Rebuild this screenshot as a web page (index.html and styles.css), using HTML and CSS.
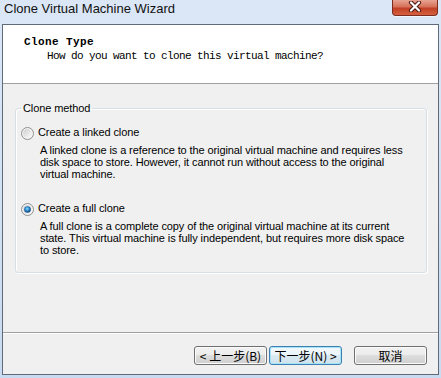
FILE: index.html
```html
<!DOCTYPE html>
<html lang="en">
<head>
    <meta charset="UTF-8">
    <meta name="viewport" content="width=device-width, initial-scale=1.0">
    <title>Clone Virtual Machine Wizard</title>
    <link rel="stylesheet" href="styles.css">
</head>
<body>
    <div class="titlebar">
        <span class="title">Clone Virtual Machine Wizard</span>
        <div class="close-btn">
            <svg width="14" height="11" viewBox="0 0 14 11">
                <path d="M3 1.5 L11 9.5 M11 1.5 L3 9.5" stroke="#4a1810" stroke-width="4.2" stroke-linecap="round"/>
                <path d="M3 1.5 L11 9.5 M11 1.5 L3 9.5" stroke="#fff" stroke-width="2.2" stroke-linecap="round"/>
            </svg>
        </div>
    </div>

    <div class="window">
        <div class="header">
            <div class="header-title">Clone Type</div>
            <div class="header-sub">How do you want to clone this virtual machine?</div>
        </div>

        <div class="content">
            <fieldset class="group">
                <legend>Clone method</legend>

                <div class="option">
                    <div class="option-row">
                        <svg class="radio" width="13" height="13" viewBox="0 0 13 13">
                            <defs>
                                <linearGradient id="rbg" x1="0" y1="0" x2="1" y2="1">
                                    <stop offset="0" stop-color="#cfcfcf"/>
                                    <stop offset="1" stop-color="#fbfbfb"/>
                                </linearGradient>
                            </defs>
                            <circle cx="6.5" cy="6.5" r="6" fill="#f4f4f4" stroke="#8e8f8f"/>
                            <circle cx="6.5" cy="6.5" r="4.5" fill="url(#rbg)"/>
                        </svg>
                        <span>Create a linked clone</span>
                    </div>
                    <p class="desc">A linked clone is a reference to the original virtual machine and requires less disk space to store. However, it cannot run without access to the original virtual machine.</p>
                </div>

                <div class="option option-full">
                    <div class="option-row">
                        <svg class="radio" width="13" height="13" viewBox="0 0 13 13">
                            <defs>
                                <radialGradient id="rdot" cx="0.45" cy="0.4" r="0.6">
                                    <stop offset="0" stop-color="#9fe6ff"/>
                                    <stop offset="0.45" stop-color="#2f8fd6"/>
                                    <stop offset="1" stop-color="#123d6e"/>
                                </radialGradient>
                            </defs>
                            <circle cx="6.5" cy="6.5" r="6" fill="#f4f4f4" stroke="#8e8f8f"/>
                            <circle cx="6.5" cy="6.5" r="4.5" fill="url(#rbg)"/>
                            <circle cx="6.5" cy="6.5" r="3.3" fill="url(#rdot)"/>
                        </svg>
                        <span>Create a full clone</span>
                    </div>
                    <p class="desc">A full clone is a complete copy of the original virtual machine at its current state. This virtual machine is fully independent, but requires more disk space to store.</p>
                </div>
            </fieldset>
        </div>

        <div class="footer">
            <button class="btn">&lt; 上一步(B)</button>
            <button class="btn btn-default">下一步(N) &gt;</button>
            <button class="btn btn-cancel">取消</button>
        </div>
    </div>
</body>
</html>
```

FILE: styles.css
```css
body {
    margin: 0;
    width: 441px;
    height: 378px;
    overflow: hidden;
    background: linear-gradient(#dbe7f6, #c9dbf0);
    font-family: "Liberation Sans", Arial, sans-serif;
    color: #000;
}
.titlebar {
    display: flex;
    align-items: flex-start;
    height: 24px;
}
.title {
    font-size: 13px;
    line-height: 16px;
    padding: 1px 0 0 4px;
    color: #111;
}
.close-btn {
    margin-left: auto;
    margin-right: 3px;
    width: 46px;
    height: 16px;
    box-sizing: border-box;
    border: 1px solid #7d2c1f;
    border-top: none;
    border-radius: 0 0 4px 4px;
    background: linear-gradient(#e8a392, #d6725a 45%, #c23f25 55%, #d4613f);
    box-shadow: 0 1px 0 rgba(255, 255, 255, 0.6);
    display: flex;
    justify-content: center;
    padding-top: 1px;
}
.window {
    margin: 0 2px;
    height: 351px;
    box-sizing: border-box;
    border: 1px solid #5f6b7a;
    background: #f0f0f0;
    display: flex;
    flex-direction: column;
}
.header {
    height: 59px;
    box-sizing: border-box;
    background: #fff;
    border-bottom: 1px solid #a0a0a0;
    padding: 11px 0 0 21px;
    font-family: "Liberation Mono", monospace;
    font-size: 11px;
    line-height: 13px;
}
.header-title {
    font-weight: bold;
    letter-spacing: 0.4px;
}
.header-sub {
    margin: 1px 0 0 23px;
    letter-spacing: -0.6px;
}
.content {
    flex: 1;
    padding: 18px 11px 0 12px;
    border-bottom: 1px solid #a0a0a0;
}
.group {
    margin: 0;
    padding: 0 14px 16px 5px;
    border: 1px solid #d5dfe5;
    border-radius: 3px;
    box-shadow: inset 1px 1px 0 #fff, 1px 1px 0 #fff;
    min-width: 0;
    font-size: 11px;
    letter-spacing: -0.1px;
}
legend {
    margin: 0;
    padding: 0 2px;
    line-height: 13px;
}
.option {
    margin-top: 11px;
}
.option-full {
    margin-top: 22px;
}
.option-row {
    display: flex;
    align-items: flex-start;
    gap: 4px;
    line-height: 13px;
}
.radio {
    margin-top: 1px;
    flex: none;
}
.desc {
    margin: 4px 0 0 19px;
    line-height: 12px;
}
.footer {
    height: 41px;
    box-sizing: border-box;
    box-shadow: inset 0 1px 0 #fff;
    display: flex;
    justify-content: flex-end;
    align-items: flex-start;
    padding: 13px 11px 0 0;
}
.btn {
    width: 73px;
    height: 19px;
    box-sizing: border-box;
    margin: 0;
    padding: 0;
    border: 1px solid #707070;
    border-radius: 3px;
    background: linear-gradient(#f2f2f2, #ebebeb 50%, #dddddd 50%, #cfcfcf);
    box-shadow: inset 0 0 0 1px #fbfbfb;
    font-family: "Noto Sans CJK SC", sans-serif;
    font-size: 12px;
    line-height: 17px;
    color: #000;
    white-space: nowrap;
}
.btn-default {
    margin-left: 2px;
    border-color: #3c7fb1;
    box-shadow: inset 0 0 0 1px #a6e3f8;
    background: linear-gradient(#f3f9fc, #eaf4f9 50%, #dbeaf2 50%, #cfe2ec);
}
.btn-cancel {
    margin-left: 12px;
}
```
